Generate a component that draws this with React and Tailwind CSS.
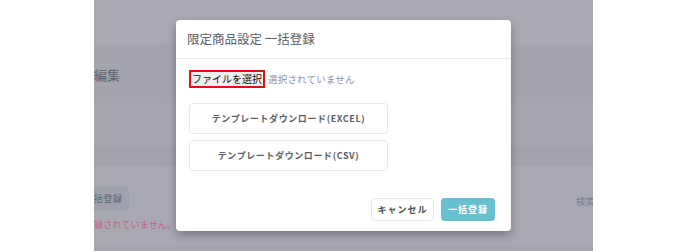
import React from 'react';

const jp = { fontFamily: '"Noto Sans CJK JP", "Noto Sans", sans-serif' };

const App = () => {
  return (
    <div className="flex h-[251px] w-[688px] bg-white overflow-hidden" style={jp}>
      <div className="w-[94px] shrink-0 bg-white" />
      <div className="relative w-[499px] shrink-0 flex flex-col bg-[#a9a9b1]">
        {/* background page under the overlay */}
        <div className="h-[44px] bg-[#a9a9b1]" />
        <div className="h-[59px] bg-[#a4a4ac] flex items-center">
          <span className="text-[13px] leading-none text-[#5f626c] mt-[2px]">編集</span>
        </div>
        <div className="h-[42px] bg-[#a8a8b0]" />
        <div className="h-[21px] bg-[#a3a3ab]" />
        <div className="flex-1 flex flex-col pt-[20px]">
          <div className="flex items-start justify-between">
            <div className="h-[24px] w-[35px] mt-[1px] rounded-r-[4px] bg-[#9fa2ac] flex items-center whitespace-nowrap text-[9px] text-[#5c5f69] tracking-[0.5px]">
              括登録
            </div>
            <span className="mt-[8px] text-[9.5px] text-[#777b88] whitespace-nowrap w-[17px] overflow-hidden">検索</span>
          </div>
          <div className="mt-[7px] whitespace-nowrap text-[9px] text-[#c2608a] tracking-[0.2px]">録されていません。</div>
        </div>
        <div className="h-[6px] bg-[#a5a5ad]" />

        {/* modal */}
        <div className="absolute left-[82px] top-[20px] w-[335px] h-[211px] bg-white rounded-[4px] shadow-[0_4px_10px_rgba(60,60,70,0.45)] flex flex-col">
          <div className="h-[39px] border-b border-[#e9ebf0] flex items-center pl-[11px]">
            <h2 className="text-[12.5px] text-[#595c64]">限定商品設定 一括登録</h2>
          </div>
          <div className="flex-1 flex flex-col px-[13px] pt-[11px]">
            <div className="flex items-center gap-[3px]">
              <button className="h-[18px] w-[76px] border-2 border-[#e0110f] bg-[#efefef] text-[10px] leading-none text-[#111] flex items-center justify-center whitespace-nowrap">
                ファイルを選択
              </button>
              <span className="text-[9.5px] text-[#8e91a8] tracking-[0.2px]">選択されていません</span>
            </div>
            <button className="mt-[15px] h-[31px] w-[199px] rounded-[4px] border border-[#e4e8f2] text-[9px] font-semibold text-[#5b5e66] tracking-[0.6px] whitespace-nowrap">
              テンプレートダウンロード(EXCEL)
            </button>
            <button className="mt-[6px] h-[31px] w-[199px] rounded-[4px] border border-[#e4e8f2] text-[9px] font-semibold text-[#5b5e66] tracking-[0.6px] whitespace-nowrap">
              テンプレートダウンロード(CSV)
            </button>
            <div className="mt-auto mb-[10px] flex justify-end gap-[7px] pr-[3px]">
              <button className="h-[23px] w-[63px] rounded-[4px] border border-[#e4e8f2] bg-white text-[9px] font-semibold text-[#4d5058] tracking-[1px] whitespace-nowrap">
                キャンセル
              </button>
              <button className="h-[23px] w-[54px] rounded-[4px] bg-[#66c0d0] text-[9px] font-semibold text-white tracking-[1px] whitespace-nowrap">
                一括登録
              </button>
            </div>
          </div>
        </div>
      </div>
      <div className="flex-1 bg-white" />
    </div>
  );
};

export default App;
